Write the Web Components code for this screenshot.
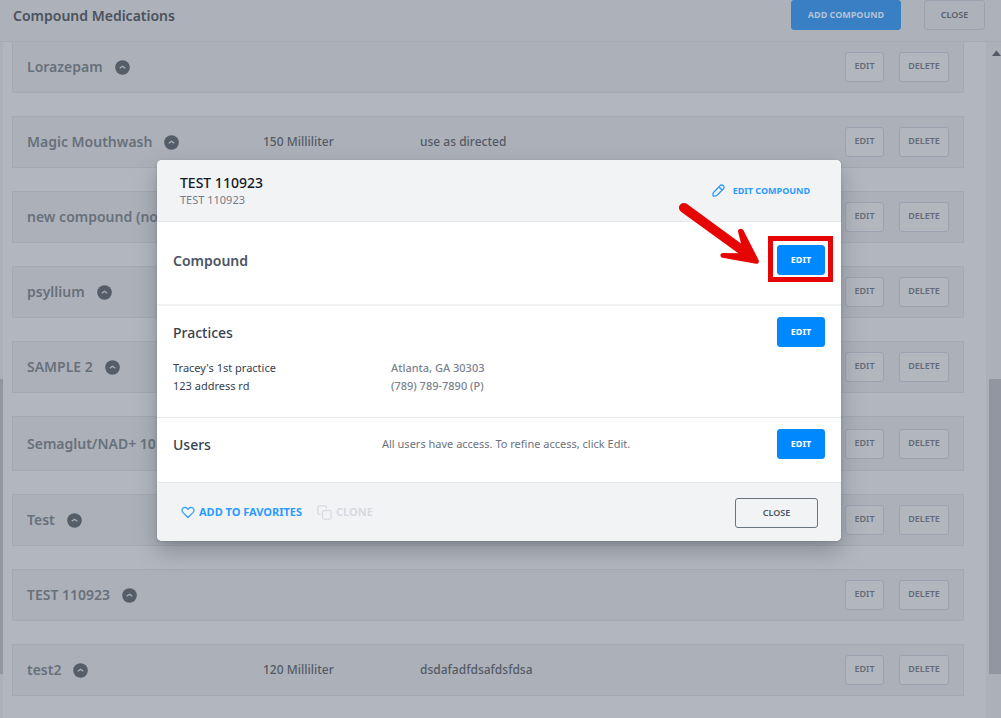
<!DOCTYPE html>
<html lang="en">
<head>
<meta charset="utf-8">
<title>Compound Medications</title>
<style>
  body {
    margin:0;
    min-height:100vh;
    display:flex;
    flex-direction:column;
    background:#b2b7bf;
    font-family:"Noto Sans", "Open Sans", sans-serif;
    font-size:12px;
    line-height:18px;
    color:#535a66;
  }
  main {display:flex; flex:1;}
</style>
</head>
<body>
  <page-header>
    Compound Medications
    <ui-button slot="actions" kind="dim-primary">ADD COMPOUND</ui-button>
    <ui-button slot="actions" kind="dim-close">CLOSE</ui-button>
  </page-header>

  <main>
    <scroll-track side="left"></scroll-track>
    <compound-list>
      <compound-row name="Lorazepam"></compound-row>
      <compound-row name="Magic Mouthwash" quantity="150 Milliliter" directions="use as directed"></compound-row>
      <compound-row name="new compound (no"></compound-row>
      <compound-row name="psyllium"></compound-row>
      <compound-row name="SAMPLE 2"></compound-row>
      <compound-row name="Semaglut/NAD+ 10" tall></compound-row>
      <compound-row name="Test"></compound-row>
      <compound-row name="TEST 110923"></compound-row>
      <compound-row name="test2" quantity="120 Milliliter" directions="dsdafadfdsafdsfdsa"></compound-row>
    </compound-list>
    <scroll-track side="right"></scroll-track>
  </main>

  <compound-dialog>
    <span slot="title">TEST 110923</span>
    <span slot="subtitle">TEST 110923</span>
    <dialog-section name="Compound" size="compound" marked></dialog-section>
    <dialog-section name="Practices" size="practices">
      <practice-info slot="details">
        <span>Tracey's 1st practice<br>123 address rd</span>
        <span slot="contact">Atlanta, GA 30303<br>(789) 789-7890 (P)</span>
      </practice-info>
    </dialog-section>
    <dialog-section name="Users" size="users">All users have access. To refine access, click Edit.</dialog-section>
  </compound-dialog>

<script>
class UiButton extends HTMLElement {
  constructor() {
    super();
    this.attachShadow({ mode: 'open' });
    this.shadowRoot.innerHTML = `
      <style>
        :host {display:block; flex:none;}
        button {
          display:block;
          box-sizing:border-box;
          width:100%;
          height:30px;
          padding:0 0 2px;
          border:1px solid #9ca2af;
          border-radius:3px;
          background:#b2b7be;
          color:#656a76;
          font:600 9px/16px "Noto Sans", "Open Sans", sans-serif;
          white-space:nowrap;
        }
        :host([kind="row-edit"]) {width:39px;}
        :host([kind="row-delete"]) {width:50px;}
        :host([kind="dim-close"]) {width:61px;}
        :host([kind="dim-close"]) button {padding:0; background:none; color:#59606c;}
        :host([kind="dim-primary"]) {width:110px;}
        :host([kind="dim-primary"]) button {padding:0; background:#387fc4; border-color:#387fc4; color:#b4c3d6; font-weight:700;}
        :host([kind="primary"]) {width:48px;}
        :host([kind="primary"]) button {padding:0; background:#0088ff; border-color:#0088ff; color:#fff; font-weight:700;}
        :host([kind="close"]) {width:83px;}
        :host([kind="close"]) button {padding:0; background:none; border-color:#6b7280; color:#4b5563;}
      </style>
      <button type="button"><slot></slot></button>
    `;
  }
}

class PageHeader extends HTMLElement {
  constructor() {
    super();
    this.attachShadow({ mode: 'open' });
    this.shadowRoot.innerHTML = `
      <style>
        :host {
          display:flex;
          box-sizing:border-box;
          height:42px;
          padding:0 16px 0 13px;
          border-bottom:1px solid #a5aab3;
          background:#acb1ba;
        }
        h1 {margin:0; flex:1; font-size:14px; line-height:31px; font-weight:600; color:#4b525d;}
        div {display:flex; gap:23px;}
      </style>
      <h1><slot></slot></h1>
      <div><slot name="actions"></slot></div>
    `;
  }
}

class CompoundList extends HTMLElement {
  constructor() {
    super();
    this.attachShadow({ mode: 'open' });
    this.shadowRoot.innerHTML = `
      <style>
        :host {display:flex; flex-direction:column; flex:1; gap:23px; padding:0 22px 21px 9px;}
      </style>
      <slot></slot>
    `;
  }
}

class CompoundRow extends HTMLElement {
  connectedCallback() {
    this.attachShadow({ mode: 'open' });
    this.shadowRoot.innerHTML = `
      <style>
        :host {
          display:grid;
          grid-template-columns:236px 157px 1fr auto;
          align-items:center;
          box-sizing:border-box;
          padding:10px 14px;
          border:1px solid #a4a9b2;
          background:#acb1b9;
          font-weight:500;
          white-space:nowrap;
        }
        :host(:first-child) {border-top:0;}
        :host([tall]) {min-height:55px;}
        .name {display:flex; align-items:center; gap:12px; font-size:14px; font-weight:600; color:#68707b;}
        .buttons {display:flex; gap:15px;}
        svg {width:15px; height:15px; flex:none;}
      </style>
      <div class="name">
        <span>${this.getAttribute('name')}</span>
        <svg viewBox="0 0 15 15">
          <circle cx="7.5" cy="7.5" r="7.3" fill="#555d69"/>
          <path d="M4.7 8.3 L7.5 6.3 L10.3 8.3" fill="none" stroke="#acb1b9" stroke-width="1.3"/>
        </svg>
      </div>
      <span>${this.getAttribute('quantity') || ''}</span>
      <span>${this.getAttribute('directions') || ''}</span>
      <div class="buttons">
        <ui-button kind="row-edit">EDIT</ui-button>
        <ui-button kind="row-delete">DELETE</ui-button>
      </div>
    `;
  }
}

class ScrollTrack extends HTMLElement {
  constructor() {
    super();
    this.attachShadow({ mode: 'open' });
    this.shadowRoot.innerHTML = `
      <style>
        :host {display:flex; flex-direction:column; box-sizing:border-box; width:15px; background:#abb0b9;}
        :host([side="left"]) {width:3px; overflow:hidden;}
        :host([side="right"]) {padding-left:3px;}
        .before {flex:337;}
        .thumb {flex:295; background:#9196a0;}
        .after {flex:44;}
        svg {display:block; width:12px; height:20px;}
        :host([side="left"]) svg {display:none;}
      </style>
      <div class="before"><svg viewBox="0 0 12 20"><path d="M3 14 L7.5 8.5 L12 14 Z" fill="#535a66"/></svg></div>
      <div class="thumb"></div>
      <div class="after"></div>
    `;
  }
}

class PracticeInfo extends HTMLElement {
  constructor() {
    super();
    this.attachShadow({ mode: 'open' });
    this.shadowRoot.innerHTML = `
      <style>
        :host {display:grid; grid-template-columns:218px 1fr; line-height:18px; color:#374151;}
        .contact {font-weight:500; color:#7b8290;}
      </style>
      <div><slot></slot></div>
      <div class="contact"><slot name="contact"></slot></div>
    `;
  }
}

class DialogSection extends HTMLElement {
  connectedCallback() {
    this.attachShadow({ mode: 'open' });
    this.shadowRoot.innerHTML = `
      <style>
        :host {display:block; box-sizing:border-box; padding:11px 16px; border-bottom:1px solid #e5e7eb; font-size:11px; color:#6b7280;}
        :host([size="compound"]) {min-height:84px; padding-top:23px; border-bottom:2px solid #f0f1f3;}
        :host([size="practices"]) {min-height:112px;}
        :host([size="users"]) {min-height:65px;}
        .top {display:grid; grid-template-columns:209px 1fr auto; align-items:center;}
        h3 {margin:0; padding-top:2px; font-size:14px; line-height:20px; font-weight:500; color:#374151;}
        :host([size="compound"]) h3 {font-weight:600; color:#4b5563;}
        .edit {position:relative;}
        /* red callout frame round the button */
        .mark {position:absolute; inset:-9px -8px -7px -9px; border:5px solid #e60505; pointer-events:none;}
        ::slotted(practice-info) {margin-top:12px;}
      </style>
      <div class="top">
        <h3>${this.getAttribute('name')}</h3>
        <span><slot></slot></span>
        <div class="edit">
          <ui-button kind="primary">EDIT</ui-button>
          ${this.hasAttribute('marked') ? '<div class="mark"></div>' : ''}
        </div>
      </div>
      <slot name="details"></slot>
    `;
  }
}

class CompoundDialog extends HTMLElement {
  constructor() {
    super();
    this.attachShadow({ mode: 'open' });
    this.shadowRoot.innerHTML = `
      <style>
        :host {position:absolute; top:160px; left:157px; right:160px; display:block;}
        .box {
          border-radius:5px;
          background:#fff;
          box-shadow:0 10px 22px rgba(60,70,80,.36), 0 1px 3px rgba(60,70,80,.25);
        }
        header, footer {display:flex; align-items:center; box-sizing:border-box; background:#f2f3f5;}
        header {height:62px; padding:0 31px 0 23px; border-bottom:1px solid #e5e7eb; border-radius:5px 5px 0 0;}
        header div {flex:1;}
        h2 {margin:0; font-size:14px; line-height:18px; font-weight:500; color:#111827;}
        p {margin:0; font-size:11px; line-height:16px; color:#747b89;}
        footer {height:58px; padding:2px 23px 0 24px; gap:15px; border-radius:0 0 5px 5px;}
        footer ui-button {margin-left:auto;}
        .link {
          display:flex;
          align-items:center;
          gap:4px;
          padding:0 0 2px;
          border:0;
          background:none;
          color:#2b9bff;
          font:700 11px/18px "Noto Sans", "Open Sans", sans-serif;
        }
        .link.small {gap:8px; padding:0; font-size:9px;}
        .link:disabled {color:#d7dae0;}
        svg {fill:none; stroke:currentColor; stroke-linecap:round; stroke-linejoin:round;}
        .arrow {position:absolute; left:515px; top:40px; width:95px; height:70px; pointer-events:none;}
      </style>
      <div class="box">
        <header>
          <div>
            <h2><slot name="title"></slot></h2>
            <p><slot name="subtitle"></slot></p>
          </div>
          <button class="link small" type="button">
            <svg width="13" height="13" viewBox="0 0 13 13" stroke-width="1.3">
              <path d="M1.2 12 Q.4 9.6 2 8 L8 1.8 Q9.6 .2 11.3 1.7 Q12.8 3.3 11.3 5 L5 11.2 Q3.4 12.6 1.2 12 Z M7 3 L10 6"/>
            </svg>
            EDIT COMPOUND
          </button>
        </header>
        <slot></slot>
        <footer>
          <button class="link" type="button">
            <svg width="14" height="13" viewBox="0 0 14 13" stroke-width="1.2">
              <path d="M7 11.5 L2 6.6 C.2 4.6 1 1.6 3.6 1.4 C5.2 1.3 6.2 2.2 7 3.4 C7.8 2.2 8.8 1.3 10.4 1.4 C13 1.6 13.8 4.6 12 6.6 Z"/>
            </svg>
            ADD TO FAVORITES
          </button>
          <button class="link" type="button" disabled>
            <svg width="15" height="15" viewBox="0 0 15 15" stroke-width="1.3">
              <rect x="5.5" y="5.5" width="8.6" height="8.6" rx="1.6"/>
              <path d="M3 9.4 H2.4 Q.9 9.4 .9 8 V2.4 Q.9 .9 2.4 .9 H8 Q9.4 .9 9.4 2.4 V3"/>
            </svg>
            CLONE
          </button>
          <ui-button kind="close">CLOSE</ui-button>
        </footer>
      </div>
      <svg class="arrow" viewBox="0 0 95 70">
        <path d="M14.7 3.8 L69 43.5 L66 31.4 Q66 28.7 68.7 28.7 Q70.8 28.7 71.7 30.8 L86.8 60.4 Q87.2 64 84 63.8 L50.3 57.7 Q48.3 57 48.3 55.3 Q48.6 53 51 53 L66.3 53.2 L9 11.8 A4.9 4.9 0 0 1 14.7 3.8 Z" fill="#e60505" stroke="none"/>
      </svg>
    `;
  }
}

customElements.define('ui-button', UiButton);
customElements.define('page-header', PageHeader);
customElements.define('compound-list', CompoundList);
customElements.define('compound-row', CompoundRow);
customElements.define('scroll-track', ScrollTrack);
customElements.define('practice-info', PracticeInfo);
customElements.define('dialog-section', DialogSection);
customElements.define('compound-dialog', CompoundDialog);
</script>
</body>
</html>
